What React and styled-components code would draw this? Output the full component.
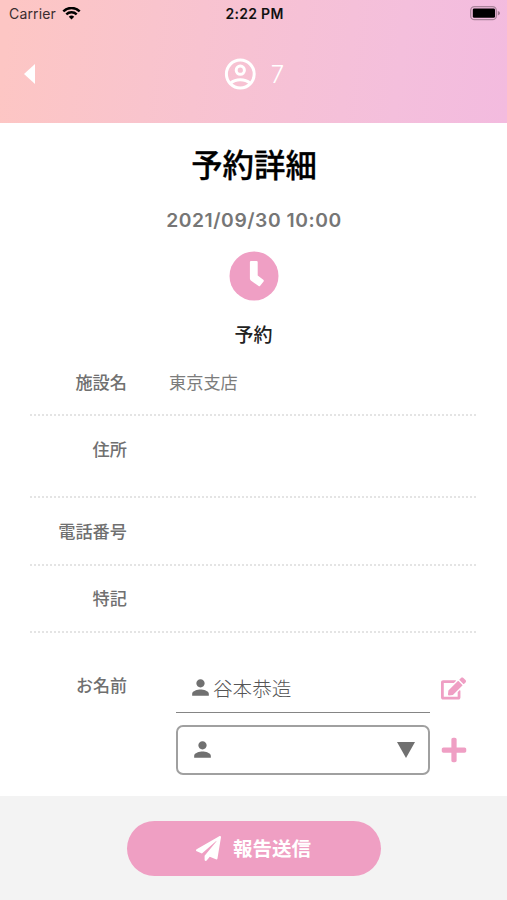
import React from 'react';
import styled, { createGlobalStyle } from 'styled-components';
import { FaEdit, FaPaperPlane, FaPlus } from 'react-icons/fa';
import { MdPerson } from 'react-icons/md';

const GlobalStyle = createGlobalStyle`
  * { box-sizing: border-box; }
  body {
    margin: 0;
    background: #fff;
    font-family: 'Noto Sans CJK JP', sans-serif;
    color: #6f6f6f;
    overflow: hidden;
  }
  svg { display: block; flex: none; }
`;

const Screen = styled.div`
  width: 507px;
  height: 900px;
  display: flex;
  flex-direction: column;
`;

const Header = styled.header`
  height: 123px;
  flex: none;
  background: linear-gradient(97deg, #fdc6c4 2%, #f9c4cd 30%, #f6c1d6 58%, #f4bfdc 78%, #f3bbdf 100%);
`;

const StatusBar = styled.div`
  height: 27px;
  padding: 0 7px 0 9px;
  display: grid;
  grid-template-columns: 1fr auto 1fr;
  align-items: center;
  font-family: Inter, sans-serif;
  color: #111;
`;

const Carrier = styled.div`
  display: flex;
  align-items: center;
  gap: 6px;
  font-size: 14px;
  letter-spacing: 0.15px;
  color: #3a2c2f;
`;

const Time = styled.div`
  font-size: 14px;
  font-weight: 600;
  letter-spacing: 0.3px;
`;

const Battery = styled.div`
  justify-self: end;
`;

const NavBar = styled.div`
  height: 94px;
  padding: 0 23px 0 24px;
  display: grid;
  grid-template-columns: 1fr auto 1fr;
  align-items: center;
  color: #fff;
`;

const Count = styled.div`
  display: flex;
  align-items: center;
  gap: 15px;
  font: 350 24px/28px Inter, sans-serif;
`;

const CountNumber = styled.span`
  padding-top: 1px;
`;

const Summary = styled.section`
  height: 225px;
  flex: none;
  display: flex;
  flex-direction: column;
  align-items: center;
`;

const Title = styled.h1`
  margin: 19px 0 0 1px;
  font-size: 31.4px;
  line-height: 44px;
  font-weight: 500;
  -webkit-text-stroke: 0.3px currentColor;
  color: #000;
`;

const DateText = styled.div`
  margin: 22px 0 0 1px;
  font: 600 19.3px/24px Inter, sans-serif;
  letter-spacing: 0.55px;
  color: #767676;
`;

const ClockMark = styled.div`
  margin-top: 19px;
`;

const Status = styled.div`
  margin-top: 18px;
  font-size: 19px;
  line-height: 30px;
  font-weight: 500;
  color: #222;
`;

const Details = styled.dl`
  margin: 0 31px 0 30px;
  flex: none;
`;

const Row = styled.div`
  height: ${(p) => p.$height}px;
  padding-top: ${(p) => p.$top}px;
  display: grid;
  grid-template-columns: 97px 1fr;
  column-gap: 42px;
  border-bottom: 2px dotted #e4e4e4;
`;

const Label = styled.dt`
  text-align: right;
  font-size: 17.2px;
  line-height: 28px;
  font-weight: 500;
  color: #707070;
`;

const Value = styled.dd`
  margin: 0;
  font-size: 17.2px;
  line-height: 28px;
  font-weight: 400;
  color: #7c7c7c;
`;

const Names = styled.section`
  flex: 1;
  padding: 31px 30px 0;
  display: grid;
  grid-template-columns: 97px 1fr;
  column-gap: 49px;
`;

const NameLabel = styled.div`
  padding-top: 7px;
  text-align: right;
  font-size: 17px;
  line-height: 28px;
  font-weight: 500;
`;

const Fields = styled.div`
  display: flex;
  flex-direction: column;
  gap: 12px;
`;

const FieldRow = styled.div`
  display: flex;
  align-items: center;
  gap: 11px;
  color: #ef9fc4;
`;

const NameField = styled.div`
  width: 254px;
  height: 49px;
  padding: 0 0 1px 12px;
  display: flex;
  align-items: center;
  border-bottom: 1.5px solid #858585;
  color: #707070;
  font-size: 19.6px;
`;

const PersonName = styled.span`
  font-weight: 300;
  color: #555;
`;

const SelectField = styled.div`
  width: 254px;
  height: 50px;
  padding: 0 13px 1px 12px;
  display: flex;
  align-items: center;
  justify-content: space-between;
  border: 2px solid #a0a0a0;
  border-radius: 7px;
  color: #707070;
`;

const AddButton = styled.span`
  margin-left: -1px;
  padding-bottom: 1px;
`;

const Footer = styled.footer`
  height: 104px;
  flex: none;
  padding-top: 25px;
  display: flex;
  justify-content: center;
  align-items: flex-start;
  background: #f3f3f3;
`;

const SubmitButton = styled.button`
  width: 254px;
  height: 55px;
  padding: 0 0 1px;
  border: 0;
  border-radius: 28px;
  display: flex;
  align-items: center;
  justify-content: center;
  gap: 12px;
  background: #ef9fc3;
  color: #fff;
  font: 700 19.5px/28px 'Noto Sans CJK JP', sans-serif;
`;

const WifiIcon = () => (
  <svg width="19" height="14" viewBox="0 0 19 14" fill="none" stroke="#000" strokeWidth="2.4">
    <path d="M1.3 4.3a11.7 11.7 0 0 1 16.4 0" />
    <path d="M4.3 7.4a7.4 7.4 0 0 1 10.4 0" />
    <path d="M9.5 12.6l-2.7-2.8a3.8 3.8 0 0 1 5.4 0z" fill="#000" stroke="none" />
  </svg>
);

const BatteryIcon = () => (
  <svg width="30" height="16" viewBox="0 0 30 16">
    <rect x=".7" y=".7" width="25.6" height="13" rx="3.8" fill="none" stroke="#a9839a" strokeWidth="1.3" />
    <rect x="2.8" y="2.4" width="22.2" height="9.4" rx="1.4" />
    <path d="M27.8 5q2.2.6 2.2 2.2t-2.2 2.2z" fill="#a07b91" />
  </svg>
);

const BackIcon = () => (
  <svg width="11" height="20" viewBox="0 0 11 20">
    <path d="M0 10L11 0v20z" fill="#fff" />
  </svg>
);

const AccountIcon = () => (
  <svg width="32" height="32" viewBox="0 0 32 32" fill="none" stroke="#fff" strokeWidth="3">
    <circle cx="16.3" cy="16" r="13.9" />
    <circle cx="16.3" cy="12.2" r="4.1" />
    <path d="M6.6 25.2Q10.5 21.8 16.3 21.8t9.7 3.4" />
  </svg>
);

const ClockIcon = () => (
  <svg width="50" height="50" viewBox="0 0 50 50">
    <circle cx="25" cy="25" r="24.5" fill="#ef9fc4" />
    <path
      d="M22 10h5.6q1.1 0 1.1 1.1V24.6l5.6 4.2q.9.7.3 1.6l-3.4 4.4q-.7.9-1.6.3L21.8 29.4q-.9-.7-.9-1.8V11.1q0-1.1 1.1-1.1z"
      fill="#fff"
    />
  </svg>
);

const CaretIcon = () => (
  <svg width="18" height="20" viewBox="0 0 18 20">
    <path d="M0 2h18L9 18z" fill="#707070" />
  </svg>
);

const details = [
  { label: '施設名', value: '東京支店', height: 68, top: 20 },
  { label: '住所', value: '', height: 82, top: 19 },
  { label: '電話番号', value: '', height: 68, top: 19 },
  { label: '特記', value: '', height: 67, top: 18 },
];

export default function App() {
  return (
    <Screen>
      <GlobalStyle />
      <Header>
        <StatusBar>
          <Carrier>Carrier <WifiIcon /></Carrier>
          <Time>2:22 PM</Time>
          <Battery><BatteryIcon /></Battery>
        </StatusBar>
        <NavBar>
          <BackIcon />
          <Count><AccountIcon /><CountNumber>7</CountNumber></Count>
        </NavBar>
      </Header>
      <Summary>
        <Title>予約詳細</Title>
        <DateText>2021/09/30 10:00</DateText>
        <ClockMark><ClockIcon /></ClockMark>
        <Status>予約</Status>
      </Summary>
      <Details>
        {details.map((item) => (
          <Row key={item.label} $height={item.height} $top={item.top}>
            <Label>{item.label}</Label>
            <Value>{item.value}</Value>
          </Row>
        ))}
      </Details>
      <Names>
        <NameLabel>お名前</NameLabel>
        <Fields>
          <FieldRow>
            <NameField><MdPerson size={25} /><PersonName>谷本恭造</PersonName></NameField>
            <FaEdit size={25} />
          </FieldRow>
          <FieldRow>
            <SelectField><MdPerson size={25} /><CaretIcon /></SelectField>
            <AddButton><FaPlus size={28} /></AddButton>
          </FieldRow>
        </Fields>
      </Names>
      <Footer>
        <SubmitButton><FaPaperPlane size={25} />報告送信</SubmitButton>
      </Footer>
    </Screen>
  );
}
